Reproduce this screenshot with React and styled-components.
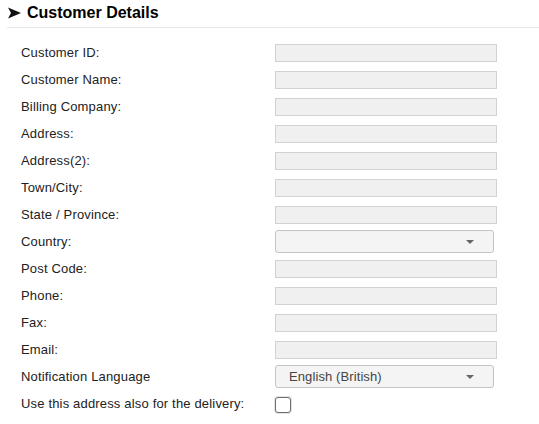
import React from 'react'
import styled, { createGlobalStyle } from 'styled-components'

const Global = createGlobalStyle`
  body {
    margin: 0;
    background: #fff;
    font-family: 'Liberation Sans', Arial, sans-serif;
    color: #222;
  }
`;

const Panel = styled.div`
  width: 539px;
  height: 424px;
`;

const Header = styled.div`
  display: flex;
  align-items: center;
  gap: 6px;
  height: 28px;
  margin-left: 7px;
  padding-left: 1px;
  border-bottom: 1px solid #e8e8e8;
  box-sizing: border-box;
  padding-bottom: 1px;
`;

const Title = styled.h2`
  margin: 0;
  font-size: 16px;
  font-weight: bold;
  color: #000;
`;

const Form = styled.div`
  display: grid;
  grid-template-columns: 254px 1fr;
  grid-auto-rows: 27px;
  padding: 11px 0 0 21px;
`;

const Label = styled.div`
  display: flex;
  align-items: center;
  font-size: 13px;
  letter-spacing: 0.17px;
  color: #222;
`;

const Field = styled.div`
  display: flex;
  align-items: center;
`;

const Input = styled.div`
  width: 222px;
  height: 18px;
  box-sizing: border-box;
  background: #f0f0f0;
  border: 1px solid #d2d2d2;
`;

const Select = styled.div`
  width: 219px;
  height: 23px;
  box-sizing: border-box;
  background: #f4f4f4;
  border: 1px solid #c4c4c4;
  border-radius: 3px;
  display: flex;
  align-items: center;
  justify-content: space-between;
  padding: 0 19px 0 13px;
  font-size: 13px;
  letter-spacing: 0.1px;
  color: #444;
`;

const Caret = styled.span`
  width: 0;
  height: 0;
  border-left: 4px solid transparent;
  border-right: 4px solid transparent;
  border-top: 4px solid #666;
`;

const Check = styled.div`
  width: 16px;
  height: 16px;
  box-sizing: border-box;
  border: 1px solid #6e6e6e;
  border-radius: 3px;
  background: #fff;
  box-shadow: 0 0 0 1px #e4e4e4;
  margin-top: 3px;
`;

const rows = [
  ['Customer ID:', 'input'],
  ['Customer Name:', 'input'],
  ['Billing Company:', 'input'],
  ['Address:', 'input'],
  ['Address(2):', 'input'],
  ['Town/City:', 'input'],
  ['State / Province:', 'input'],
  ['Country:', 'select', ''],
  ['Post Code:', 'input'],
  ['Phone:', 'input'],
  ['Fax:', 'input'],
  ['Email:', 'input'],
  ['Notification Language', 'select', 'English (British)'],
  ['Use this address also for the delivery:', 'check'],
];

export default function App() {
  return (
    <Panel>
      <Global />
      <Header>
        <svg width="13" height="12" viewBox="0 0 13 12">
          <path d="M0 0.5 L13 6 L0 11.5 L3 6 Z" fill="#111" />
        </svg>
        <Title>Customer Details</Title>
      </Header>
      <Form>
        {rows.map(([label, kind, value]) => (
          <React.Fragment key={label}>
            <Label>{label}</Label>
            <Field>
              {kind === 'input' && <Input />}
              {kind === 'select' && (
                <Select>
                  <span>{value}</span>
                  <Caret />
                </Select>
              )}
              {kind === 'check' && <Check />}
            </Field>
          </React.Fragment>
        ))}
      </Form>
    </Panel>
  )
}
